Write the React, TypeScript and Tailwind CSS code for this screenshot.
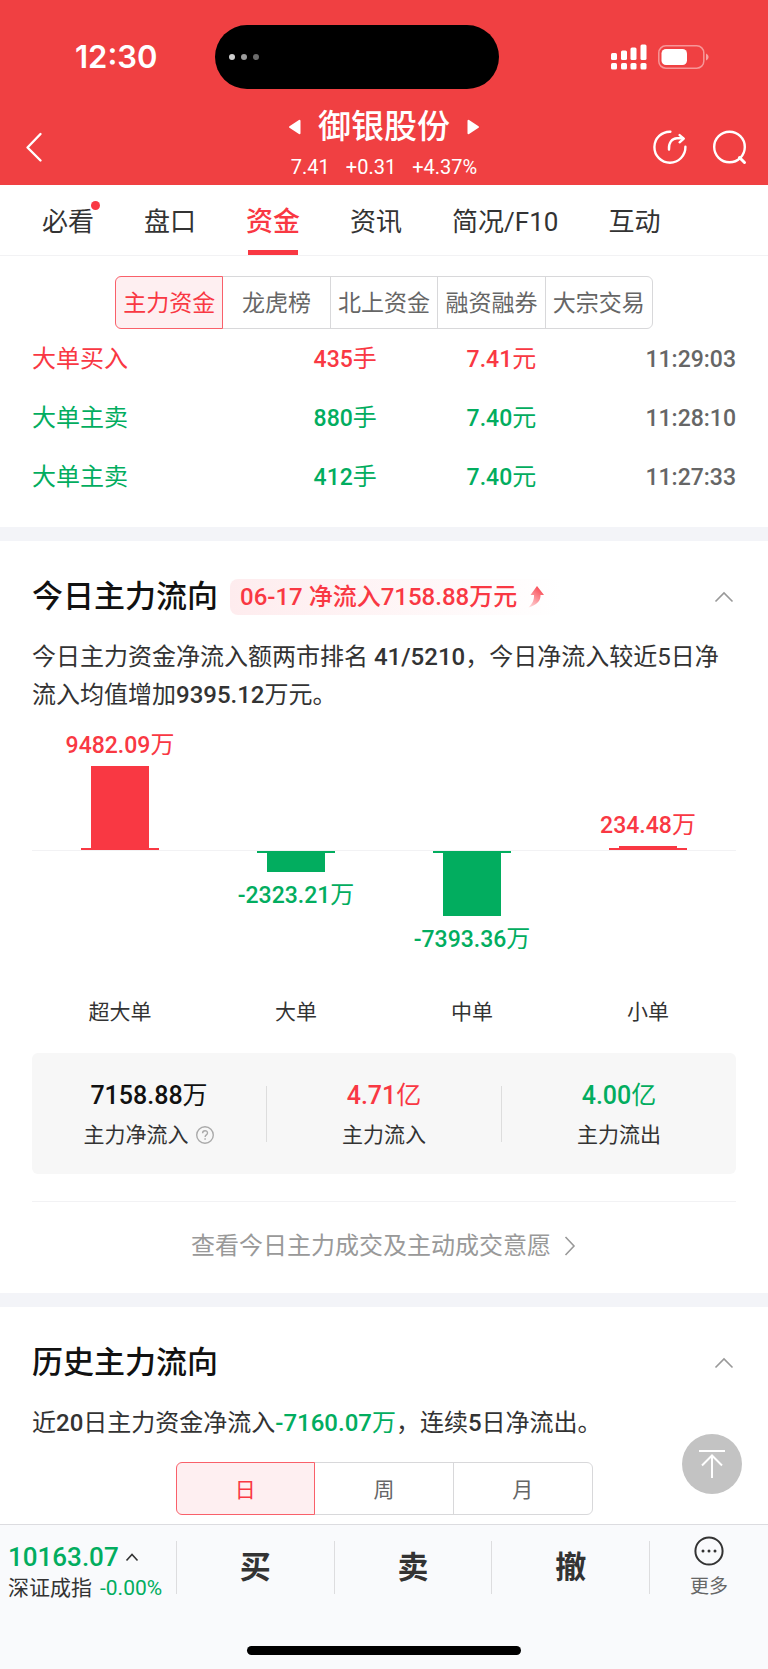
import { useState } from "react";
import type { ReactNode } from "react";
import { clsx } from "clsx";

type Trend = "up" | "down";

const NAV_TABS = ["必看", "盘口", "资金", "资讯", "简况/F10", "互动"];
const FUND_TABS = ["主力资金", "龙虎榜", "北上资金", "融资融券", "大宗交易"];
const PERIODS = ["日", "周", "月"];

const TRADES: {
  type: string;
  lots: string;
  price: string;
  time: string;
  trend: Trend;
}[] = [
  { type: "大单买入", lots: "435", price: "7.41", time: "11:29:03", trend: "up" },
  { type: "大单主卖", lots: "880", price: "7.40", time: "11:28:10", trend: "down" },
  { type: "大单主卖", lots: "412", price: "7.40", time: "11:27:33", trend: "down" },
];

const FLOWS = [
  { name: "超大单", value: 9482.09 },
  { name: "大单", value: -2323.21 },
  { name: "中单", value: -7393.36 },
  { name: "小单", value: 234.48 },
];

const MAX_BAR = 84;
const MAX_FLOW = 9482.09;

const trendColor = (trend: Trend) =>
  trend === "up" ? "text-[#f93843]" : "text-[#02ad5f]";

export default function App() {
  return (
    <div
      lang="zh-CN"
      className="relative w-full bg-white text-[#333333] font-[family-name:Roboto,'Noto_Sans_CJK_SC',sans-serif]"
    >
      <Header />
      <NavTabs />
      <main>
        <TradeSection />
        <TodaySection />
        <HistorySection />
      </main>
      <BottomBar />
    </div>
  );
}

function Header() {
  return (
    <header className="bg-[#f04042] text-white pt-[25px]">
      <StatusBar />
      <div className="grid grid-cols-[1fr_auto_1fr] items-center h-24 pt-[18px] px-6">
        <button type="button" aria-label="返回" className="justify-self-start">
          <svg width="20" height="32" viewBox="0 0 20 32" fill="none">
            <path
              d="M16.5 3 3.5 16.5 16.5 29.5"
              stroke="currentColor"
              strokeWidth="2.4"
              strokeLinecap="round"
              strokeLinejoin="round"
            />
          </svg>
        </button>
        <div className="flex flex-col items-center pb-2">
          <div className="flex items-center gap-4">
            <button type="button" aria-label="上一只">
              <svg width="14" height="16" viewBox="0 0 14 16">
                <path
                  d="M11.5 1.8v12.4L2 8z"
                  fill="currentColor"
                  stroke="currentColor"
                  strokeWidth="2"
                  strokeLinejoin="round"
                />
              </svg>
            </button>
            <h1 className="text-[33px] leading-10 font-medium">御银股份</h1>
            <button type="button" aria-label="下一只">
              <svg width="14" height="16" viewBox="0 0 14 16">
                <path
                  d="M2.5 1.8v12.4L12 8z"
                  fill="currentColor"
                  stroke="currentColor"
                  strokeWidth="2"
                  strokeLinejoin="round"
                />
              </svg>
            </button>
          </div>
          <p className="flex gap-4 mt-2 text-[20px] leading-6">
            <span>7.41</span>
            <span>+0.31</span>
            <span>+4.37%</span>
          </p>
        </div>
        <div className="flex gap-6 justify-self-end -mr-1">
          <button type="button" aria-label="分享">
            <svg
              width="36"
              height="36"
              viewBox="0 0 36 36"
              fill="none"
              stroke="currentColor"
              strokeWidth="2.4"
              strokeLinecap="round"
              strokeLinejoin="round"
            >
              <path d="M18.4 2.7A15.5 15.5 0 1 0 33.4 17.8" />
              <path d="M17 20.6c-.6-6.8 3-11.3 8-11.3h6" />
              <path d="M27.6 6.1 31.8 9.6 27.6 13.3" />
            </svg>
          </button>
          <button type="button" aria-label="搜索">
            <svg
              width="36"
              height="36"
              viewBox="0 0 36 36"
              fill="none"
              stroke="currentColor"
              strokeWidth="2.4"
              strokeLinecap="round"
            >
              <circle cx="17.5" cy="18" r="15.3" />
              <path d="m27.5 28.5 5 5" strokeWidth="3" />
            </svg>
          </button>
        </div>
      </div>
    </header>
  );
}

function StatusBar() {
  return (
    <div className="flex items-center">
      <time className="w-[28%] pl-[75px] text-[31px] leading-9 font-semibold font-[family-name:Inter,sans-serif]">
        12:30
      </time>
      <div className="flex items-center gap-1.5 w-[37%] h-16 pl-3.5 rounded-full bg-black">
        <span className="w-1.5 h-1.5 rounded-full bg-[#cfcfcf]" />
        <span className="w-1.5 h-1.5 rounded-full bg-[#9c9c9c]" />
        <span className="w-1.5 h-1.5 rounded-full bg-[#6b6b6b]" />
      </div>
      <div className="flex items-center gap-2.5 ml-auto pr-[58px]">
        <svg width="38" height="26" viewBox="0 0 38 26" fill="currentColor">
          <rect x="1" y="9" width="6" height="7" rx="1.5" />
          <rect x="11" y="6.5" width="6" height="9.5" rx="1.5" />
          <rect x="20.5" y="3.5" width="6" height="12.5" rx="1.5" />
          <rect x="30.5" y="0.5" width="6" height="15.5" rx="1.5" />
          <rect x="1" y="19" width="6" height="6.5" rx="1.5" />
          <rect x="11" y="19" width="6" height="6.5" rx="1.5" />
          <rect x="20.5" y="19" width="6" height="6.5" rx="1.5" />
          <rect x="30.5" y="19" width="6" height="6.5" rx="1.5" />
        </svg>
        <svg width="52" height="24" viewBox="0 0 52 24">
          <rect
            x="0.8"
            y="0.8"
            width="45"
            height="22.4"
            rx="7"
            fill="none"
            stroke="#fff"
            strokeOpacity="0.45"
            strokeWidth="1.5"
          />
          <rect x="3.5" y="4" width="25.5" height="16" rx="4.5" fill="#fff" />
          <path d="M48 8.5c3.4 1.4 3.4 5.6 0 7z" fill="#fff" fillOpacity="0.5" />
        </svg>
      </div>
    </div>
  );
}

function NavTabs() {
  const [active, setActive] = useState("资金");

  return (
    <nav className="flex gap-[50px] pl-[42px] border-b border-[#f2f2f4]">
      {NAV_TABS.map((tab) => (
        <button
          key={tab}
          type="button"
          onClick={() => setActive(tab)}
          className={clsx(
            "relative h-[70px] pt-1 whitespace-nowrap",
            tab === active
              ? "text-[27px] font-medium text-[#f93843]"
              : "text-[26px]"
          )}
        >
          {tab}
          {tab === "必看" && (
            <span className="absolute top-4 -right-1.5 w-[9px] h-[9px] rounded-full bg-[#f93843]" />
          )}
          {tab === active && (
            <span className="absolute bottom-0 inset-x-0.5 h-[5px] bg-[#f93843]" />
          )}
        </button>
      ))}
    </nav>
  );
}

type SegmentedProps = {
  options: string[];
  className: string;
};

function Segmented({ options, className }: SegmentedProps) {
  const [active, setActive] = useState(options[0]);

  return (
    <div className={clsx("flex mx-auto h-[53px]", className)}>
      {options.map((option) => (
        <button
          key={option}
          type="button"
          onClick={() => setActive(option)}
          className={clsx(
            "flex-1 pt-1 border -ml-px first:ml-0 first:rounded-l-md last:rounded-r-md whitespace-nowrap",
            option === active
              ? "relative border-[#f9606a] bg-[#feeff1] text-[#f93843]"
              : "border-[#d8d8da] text-[#666666]"
          )}
        >
          {option}
        </button>
      ))}
    </div>
  );
}

function Num({ children }: { children: ReactNode }) {
  return <span className="text-[23px] leading-none font-medium">{children}</span>;
}

function TradeSection() {
  return (
    <section className="pt-5 pb-[21px] border-b-14 border-[#f3f4f8]">
      <Segmented options={FUND_TABS} className="w-[538px] text-[23px]" />
      <div className="px-8">
        <table className="w-full text-2xl">
          <tbody>
            {TRADES.map((trade) => (
              <tr key={trade.time} className={clsx("h-[59px]", trendColor(trade.trend))}>
                <td className="p-0 w-2/5">{trade.type}</td>
                <td className="p-0 w-[153px]">
                  <Num>{trade.lots}</Num>手
                </td>
                <td className="p-0">
                  <Num>{trade.price}</Num>元
                </td>
                <td className="p-0 text-right text-[#666666]">
                  <Num>{trade.time}</Num>
                </td>
              </tr>
            ))}
          </tbody>
        </table>
      </div>
    </section>
  );
}

function CollapseButton() {
  return (
    <button type="button" aria-label="收起" className="ml-auto">
      <svg width="24" height="16" viewBox="0 0 24 16" fill="none">
        <path d="M3.5 12.5 12 4l8.5 8.5" stroke="#999" strokeWidth="1.6" />
      </svg>
    </button>
  );
}

function TodaySection() {
  return (
    <section className="px-8 pt-9 border-b-14 border-[#f3f4f8]">
      <div className="flex items-center h-10">
        <h2 className="text-[31px] font-medium text-[#111111]">今日主力流向</h2>
        <p className="flex items-center gap-2.5 h-9 ml-3 pl-2.5 pr-4 rounded-lg bg-linear-to-r from-[#feecee] to-white text-2xl font-medium text-[#f93843] whitespace-nowrap">
          06-17 净流入7158.88万元
          <svg width="18" height="24" viewBox="0 0 18 24">
            <defs>
              <linearGradient id="rise" x1="0" y1="1" x2="0.6" y2="0">
                <stop offset="0" stopColor="#f93843" stopOpacity="0.15" />
                <stop offset="1" stopColor="#f93843" stopOpacity="0.9" />
              </linearGradient>
            </defs>
            <path
              d="M10 1 17 10h-3.5c.2 6-3.7 10-12 12.5C5.6 18.5 7.2 15 7 10H3.5z"
              fill="url(#rise)"
            />
          </svg>
        </p>
        <CollapseButton />
      </div>
      <p className="mt-[21px] text-2xl leading-[38px]">
        今日主力资金净流入额两市排名 <span className="font-medium">41/5210</span>
        ，今日净流入较近5日净流入均值增加
        <span className="font-medium">9395.12</span>万元。
      </p>
      <FlowChart />
      <Summary />
      <a
        href="#detail"
        className="flex items-center justify-center gap-3 h-[92px] mt-[27px] pb-1 border-t border-[#f2f2f4] text-2xl text-[#999999]"
      >
        查看今日主力成交及主动成交意愿
        <svg width="14" height="22" viewBox="0 0 14 22" fill="none">
          <path d="m2.5 2 8.5 9-8.5 9" stroke="#999" strokeWidth="1.6" />
        </svg>
      </a>
    </section>
  );
}

function FlowChart() {
  return (
    <div className="mt-4">
      <div className="flex">
        {FLOWS.map(({ name, value }) => {
          const up = value > 0;
          const bar = (
            <div
              className={clsx("w-[58px]", up ? "bg-[#f93843]" : "bg-[#02ad5f]")}
              style={{
                height: Math.max(4, Math.round((Math.abs(value) / MAX_FLOW) * MAX_BAR)),
              }}
            />
          );
          const label = (
            <span className="text-2xl leading-[30px]">
              <Num>{value.toFixed(2)}</Num>万
            </span>
          );

          return (
            <div key={name} className={clsx("flex-1", trendColor(up ? "up" : "down"))}>
              <div className="flex flex-col items-center justify-end gap-1.5 h-[121px] border-b border-[#f2f2f4]">
                {up && (
                  <>
                    {label}
                    <div className="flex flex-col items-center justify-end">
                      {bar}
                      <div className="w-[78px] h-0.5 -mt-0.5 bg-[#f93843]" />
                    </div>
                  </>
                )}
              </div>
              <div className="flex flex-col items-center gap-2 h-[146px]">
                {!up && (
                  <>
                    <div className="flex flex-col items-center">
                      <div className="w-[78px] h-0.5 -mb-0.5 bg-[#02ad5f]" />
                      {bar}
                    </div>
                    {label}
                  </>
                )}
              </div>
            </div>
          );
        })}
      </div>
      <div className="flex text-[21px] leading-[30px] text-center">
        {FLOWS.map((flow) => (
          <span key={flow.name} className="flex-1">
            {flow.name}
          </span>
        ))}
      </div>
    </div>
  );
}

function Summary() {
  return (
    <div className="flex items-center mt-[26px] h-[121px] rounded-md bg-[#f7f7f7] divide-x divide-[#dddddd] text-center">
      <SummaryItem value="7158.88" unit="万" color="text-[#111111]">
        主力净流入
        <svg width="20" height="20" viewBox="0 0 20 20" fill="none" stroke="#aaa">
          <circle cx="10" cy="10" r="8.3" strokeWidth="1.4" />
          <path
            d="M7.6 8.2c0-3.2 4.9-3.2 4.9-.2 0 1.9-2.4 1.9-2.4 4"
            strokeWidth="1.4"
          />
          <path d="M10.1 13.2v1.5" strokeWidth="1.5" />
        </svg>
      </SummaryItem>
      <SummaryItem value="4.71" unit="亿" color="text-[#f93843]">
        主力流入
      </SummaryItem>
      <SummaryItem value="4.00" unit="亿" color="text-[#02ad5f]">
        主力流出
      </SummaryItem>
    </div>
  );
}

type SummaryItemProps = {
  value: string;
  unit: string;
  color: string;
  children: ReactNode;
};

function SummaryItem({ value, unit, color, children }: SummaryItemProps) {
  return (
    <div className="flex flex-col flex-1 justify-center gap-2 h-14 pt-0.5">
      <p className={clsx("text-[25px] leading-8", color)}>
        <span className="font-medium">{value}</span>
        {unit}
      </p>
      <p className="flex items-center justify-center gap-1.5 text-[21px] leading-[30px]">
        {children}
      </p>
    </div>
  );
}

function HistorySection() {
  return (
    <section className="relative px-8 pt-9 pb-[9px]">
      <div className="flex items-center h-10">
        <h2 className="text-[31px] font-medium text-[#111111]">历史主力流向</h2>
        <CollapseButton />
      </div>
      <p className="mt-[21px] mb-5 text-2xl leading-[38px]">
        近<span className="font-medium">20</span>日主力资金净流入
        <span className="text-[#02ad5f]">
          <span className="font-medium">-7160.07</span>万
        </span>
        ，连续<span className="font-medium">5</span>日净流出。
      </p>
      <Segmented options={PERIODS} className="w-[417px] text-[21px]" />
      <button
        type="button"
        aria-label="回到顶部"
        className="absolute right-[26px] bottom-[30px] flex items-center justify-center w-[60px] h-[60px] rounded-full bg-[#c3c3c3]"
      >
        <svg
          width="30"
          height="32"
          viewBox="0 0 30 32"
          fill="none"
          stroke="#fff"
          strokeWidth="2"
        >
          <path d="M2 3h26M15 30V7M5 17.5 15 7.5l10 10" />
        </svg>
      </button>
    </section>
  );
}

function BottomBar() {
  return (
    <footer className="bg-[#f9fafc] border-t border-[#dcdce0] pt-4 pb-3.5">
      <div className="flex h-[53px] divide-x divide-[#dddddf]">
        <button type="button" className="w-[177px] pl-2 text-left">
          <span className="flex items-center gap-1.5 text-[26px] leading-8 font-medium text-[#02ad5f]">
            10163.07
            <svg width="14" height="10" viewBox="0 0 14 10" fill="none">
              <path d="m1.5 8.5 5.5-6 5.5 6" stroke="#333" strokeWidth="1.6" />
            </svg>
          </span>
          <span className="flex gap-2 text-[21px] leading-[30px] whitespace-nowrap">
            深证成指 <span className="text-[#02ad5f]">-0.00%</span>
          </span>
        </button>
        {["买", "卖", "撤"].map((action) => (
          <button
            key={action}
            type="button"
            className="flex-1 text-[31px] leading-[53px] font-bold"
          >
            {action}
          </button>
        ))}
        <button
          type="button"
          className="flex flex-col items-center gap-1.5 w-[118px] text-[19px] leading-7 text-[#666666]"
        >
          <svg
            width="32"
            height="32"
            viewBox="0 0 32 32"
            fill="#333"
            className="-mt-1.5 shrink-0"
          >
            <circle cx="16" cy="16" r="13.6" fill="none" stroke="#333" strokeWidth="2" />
            <circle cx="10" cy="16" r="1.5" />
            <circle cx="16" cy="16" r="1.5" />
            <circle cx="22" cy="16" r="1.5" />
          </svg>
          更多
        </button>
      </div>
      <div className="w-[274px] h-[9px] mx-auto mt-[52px] rounded-full bg-black" />
    </footer>
  );
}
